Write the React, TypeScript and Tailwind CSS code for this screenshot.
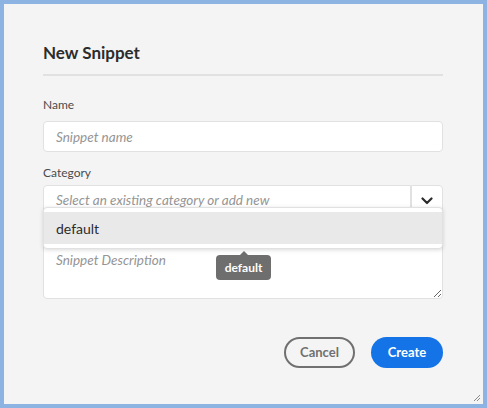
import React from "react";

const font = { fontFamily: "Lato, 'Open Sans', sans-serif" };

function Chevron() {
  return (
    <svg width="12" height="8" viewBox="0 0 12 8" fill="none">
      <path d="M1.5 1.5 L6 6 L10.5 1.5" stroke="#2c2c2c" strokeWidth="2.2" strokeLinecap="round" strokeLinejoin="round" />
    </svg>
  );
}

export default function App() {
  return (
    <div className="bg-[#8db3e2] p-1 w-[487px] h-[408px]" style={font}>
      <div className="relative h-[400px] bg-[#f4f4f4] pl-[39px] pr-[40px] pt-[37px]">
        <h2 className="text-[17px] leading-[24px] font-bold text-[#2c2c2c]">New Snippet</h2>
        <div className="mt-[9px] h-[2px] bg-[#e1e1e1]" />

        <label className="block mt-[21px] text-[12px] leading-[16px] text-[#4b4b4b]">Name</label>
        <input
          className="mt-2 block w-full h-[31px] rounded bg-white border border-[#e1e1e1] px-3 text-[13.5px] italic placeholder:text-[#959595] outline-none"
          placeholder="Snippet name"
        />

        <label className="block mt-[13px] text-[12px] leading-[16px] text-[#4b4b4b]">Category</label>
        <div className="relative mt-1 flex h-[31px]">
          <input
            className="flex-1 min-w-0 rounded-l bg-white border border-[#e1e1e1] px-3 text-[13.5px] italic placeholder:text-[#959595] outline-none"
            placeholder="Select an existing category or add new"
          />
          <button className="w-[32px] flex items-center justify-center rounded-r bg-white border border-[#e1e1e1]">
            <Chevron />
          </button>
          <div className="absolute left-0 right-0 top-[22px] z-10 rounded bg-white border border-[#e1e1e1] py-1 shadow-[0_1px_4px_rgba(0,0,0,0.15)]">
            <div className="h-[32px] flex items-center bg-[#e9e9e9] px-3 text-[14px] text-[#2c2c2c]">default</div>
          </div>
        </div>

        <textarea
          className="mt-[26px] block w-full h-[57px] rounded bg-white border border-[#e1e1e1] px-3 pt-[7px] text-[13.5px] leading-[20px] italic placeholder:text-[#959595] outline-none"
          placeholder="Snippet Description"
        />

        <div className="mt-[38px] flex justify-end gap-4">
          <button className="w-[71px] h-[31px] rounded-full border-2 border-[#707070] text-[13px] font-bold text-[#707070]">
            Cancel
          </button>
          <button className="w-[72px] h-[31px] rounded-full bg-[#1473e6] text-[13px] font-bold text-white">
            Create
          </button>
        </div>

        <div className="absolute left-[212px] top-[247px] z-20 flex flex-col items-center">
          <div className="w-0 h-0 border-l-[4px] border-r-[4px] border-b-[4px] border-l-transparent border-r-transparent border-b-[#6e6e6e]" />
          <div className="w-[55px] h-[25px] rounded bg-[#6e6e6e] flex items-center justify-center text-[12px] font-bold text-white">
            default
          </div>
        </div>

        <svg className="absolute right-[2px] bottom-[2px]" width="8" height="8" viewBox="0 0 8 8">
          <path d="M7 1 L1 7 M7 4 L4 7" stroke="#8a8a8a" strokeWidth="1" />
        </svg>
      </div>
    </div>
  );
}
